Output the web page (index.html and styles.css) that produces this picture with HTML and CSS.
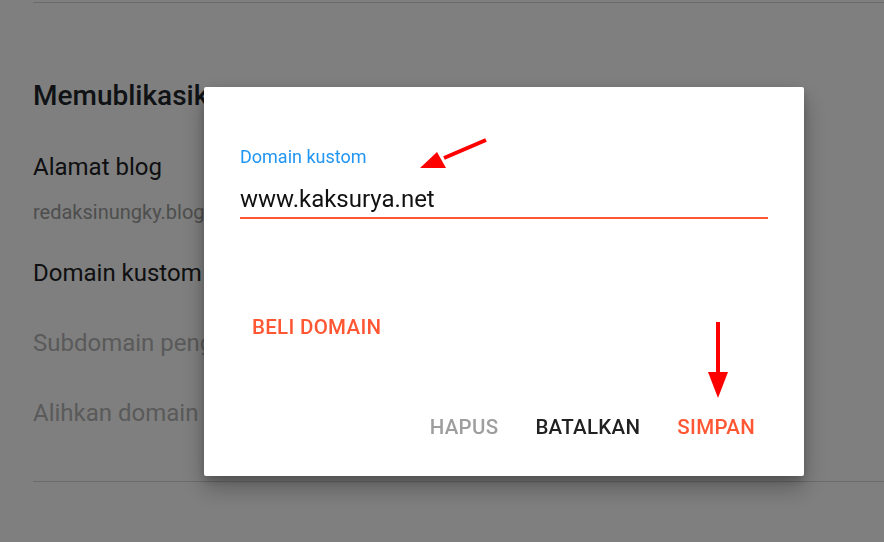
FILE: index.html
```html
<!DOCTYPE html>
<html lang="id">
<head>
<meta charset="utf-8">
<title>Domain kustom</title>
<link rel="stylesheet" href="styles.css">
</head>
<body>
<main class="page">
  <hr class="divider top">
  <section class="section">
    <h2 class="section-title">Memublikasikan</h2>
    <div class="item first">
      <div class="item-title">Alamat blog</div>
      <div class="item-sub">redaksinungky.blogspot.com</div>
    </div>
    <div class="item after-sub">
      <div class="item-title">Domain kustom</div>
    </div>
    <div class="item">
      <div class="item-title disabled">Subdomain pengalihan</div>
    </div>
    <div class="item">
      <div class="item-title disabled">Alihkan domain</div>
    </div>
  </section>
  <hr class="divider bottom">
</main>

<div class="overlay">
  <div class="dialog">
    <div class="field">
      <label class="field-label" for="domain">Domain kustom</label>
      <input class="field-input" id="domain" type="text" value="www.kaksurya.net">
    </div>
    <div class="buy-row">
      <button class="btn accent">BELI DOMAIN</button>
    </div>
    <div class="actions">
      <button class="btn muted">HAPUS</button>
      <button class="btn dark">BATALKAN</button>
      <button class="btn accent">SIMPAN</button>
    </div>
  </div>
</div>

<svg class="annot annot-1" width="80" height="45" viewBox="0 0 80 45">
  <line x1="66" y1="10" x2="24" y2="28" stroke="#ff0000" stroke-width="4"/>
  <polygon points="0,38 17,22 26,38" fill="#ff0000"/>
</svg>
<svg class="annot annot-2" width="24" height="80" viewBox="0 0 24 80">
  <line x1="12" y1="0" x2="12" y2="52" stroke="#ff0000" stroke-width="4"/>
  <polygon points="2,50 22,50 12,76" fill="#ff0000"/>
</svg>
</body>
</html>
```
FILE: styles.css
```css
* { box-sizing: border-box; }
html, body { margin: 0; padding: 0; }
body {
  width: 884px;
  height: 542px;
  overflow: hidden;
  background: #ffffff;
  font-family: Roboto, "Noto Sans", Arial, sans-serif;
  color: #202124;
}
.page {
  padding-left: 33px;
}
.divider {
  border: 0;
  height: 1px;
  background: #d6d6d6;
  margin: 0;
}
.divider.top { margin-top: 2px; }
.divider.bottom { margin-top: 51px; }
.section { padding-top: 76px; }
.section-title {
  margin: 0;
  font-size: 28px;
  font-weight: 500;
  line-height: 34px;
  color: #1f262b;
}
.item-title {
  font-size: 24px;
  line-height: 34px;
  color: #202124;
  white-space: nowrap;
}
.item-title.disabled { color: #b4b4b4; }
.item-sub {
  margin-top: 16px;
  font-size: 20px;
  line-height: 24px;
  color: #9c9c9c;
  white-space: nowrap;
}
.item { padding-top: 36px; }
.item.first { padding-top: 37px; }
.item.after-sub { padding-top: 32px; }

.overlay {
  position: fixed;
  inset: 0;
  background: rgba(0, 0, 0, 0.5);
  padding: 87px 0 0 204px;
}
.dialog {
  width: 600px;
  height: 389px;
  background: #fff;
  border-radius: 2px;
  box-shadow: 0 12px 24px rgba(0,0,0,0.28), 0 4px 10px rgba(0,0,0,0.2);
  padding: 60px 36px 0 36px;
  display: flex;
  flex-direction: column;
}
.field { display: flex; flex-direction: column; }
.field-label {
  font-size: 18px;
  line-height: 20px;
  color: #2196f3;
}
.field-input {
  margin-top: 17px;
  border: 0;
  border-bottom: 2px solid #ff5733;
  padding: 0 0 3px 0;
  font-family: inherit;
  font-size: 24px;
  line-height: 30px;
  color: #111;
  outline: none;
  background: transparent;
}
.buy-row { padding-top: 96px; }
.btn {
  background: none;
  border: 0;
  padding: 0 12px;
  font-family: inherit;
  font-size: 20.5px;
  font-weight: 500;
  line-height: 24px;
  letter-spacing: 0.3px;
  cursor: pointer;
}
.btn.accent { color: #ff5733; }
.btn.muted { color: #9e9e9e; }
.btn.dark { color: #212121; }
.actions {
  margin-top: 76px;
  display: flex;
  justify-content: flex-end;
  gap: 13px;
  padding-right: 1px;
}

.annot { position: fixed; }
.annot-1 { left: 420px; top: 130px; }
.annot-2 { left: 706px; top: 322px; }
```
